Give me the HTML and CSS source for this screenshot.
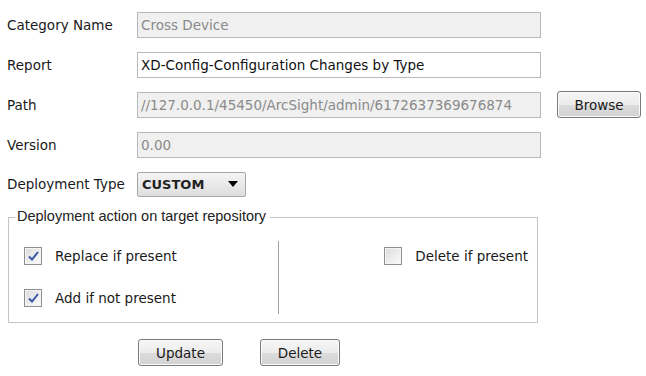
FILE: index.html
```html
<!DOCTYPE html>
<html lang="en">
	<head>
		<meta charset="UTF-8" />
		<title>Deployment</title>
		<link rel="stylesheet" href="styles.css">
	</head>
	<body>
		<form class="deploy">
			<div class="fields">
				<label>Category Name</label>
				<div class="box disabled">Cross Device</div>
				<span></span>

				<label>Report</label>
				<div class="box">XD-Config-Configuration Changes by Type</div>
				<span></span>

				<label>Path</label>
				<div class="box disabled">//127.0.0.1/45450/ArcSight/admin/6172637369676874</div>
				<button type="button" class="btn">Browse</button>

				<label>Version</label>
				<div class="box disabled">0.00</div>
				<span></span>

				<label>Deployment Type</label>
				<div class="select">
					<span>CUSTOM</span>
					<svg width="10" height="6" viewBox="0 0 10 6"><path d="M0 0 H10 L5 6 Z" fill="#000"/></svg>
				</div>
				<span></span>
			</div>

			<div class="action">
				<span class="legend">Deployment action on target repository</span>
				<div class="col">
					<div class="check">
						<span class="tick"><svg width="11" height="10" viewBox="0 0 11 10"><path d="M1 5.5 L4 8.5 L10 1" fill="none" stroke="#3a55a6" stroke-width="2"/></svg></span>
						Replace if present
					</div>
					<div class="check">
						<span class="tick"><svg width="11" height="10" viewBox="0 0 11 10"><path d="M1 5.5 L4 8.5 L10 1" fill="none" stroke="#3a55a6" stroke-width="2"/></svg></span>
						Add if not present
					</div>
				</div>
				<div class="divider"></div>
				<div class="col right">
					<div class="check">
						<span class="tick"></span>
						Delete if present
					</div>
				</div>
			</div>

			<div class="actions">
				<button type="button" class="btn">Update</button>
				<button type="button" class="btn">Delete</button>
			</div>
		</form>
	</body>
</html>
```

FILE: styles.css
```css
* {
	box-sizing: border-box;
	margin: 0;
	padding: 0;
}

body {
	font-family: "DejaVu Sans", sans-serif;
	font-size: 13.5px;
	color: #1a1a1a;
	background: #fff;
}

.deploy {
	padding: 12px 0 0 7px;
	width: 646px;
}

.fields {
	display: grid;
	grid-template-columns: 114px 404px 84px;
	column-gap: 16px;
	row-gap: 13.5px;
	align-items: center;
}

.fields label {
	line-height: 26px;
	white-space: nowrap;
}

.box {
	height: 26px;
	line-height: 24px;
	border: 1px solid #b9b9b9;
	padding: 0 3px;
	background: #fff;
	color: #111;
	white-space: nowrap;
	overflow: hidden;
}

.box.disabled {
	background: #f0f0f0;
	color: #8a8a8a;
}

.btn {
	font-family: inherit;
	font-size: 13.5px;
	color: #1a1a1a;
	height: 27px;
	border: 1px solid #7a7a7a;
	border-radius: 3px;
	background: linear-gradient(#f6f6f6 0%, #ececec 50%, #dcdcdc 51%, #d2d2d2 100%);
	box-shadow: inset 0 0 0 1px #fbfbfb;
	cursor: pointer;
}

.select {
	width: 109px;
	height: 25px;
	border: 1px solid #a6a6a6;
	border-radius: 2px;
	background: linear-gradient(#f4f4f4, #dedede);
	display: flex;
	align-items: center;
	justify-content: space-between;
	padding: 0 7px 0 4px;
	font-size: 13px;
	font-weight: bold;
	color: #222;
}

/* group box with caption sitting on the top border */
.action {
	position: relative;
	margin: 20px 0 0 1px;
	width: 530px;
	height: 106px;
	border: 1px solid #c4c4c4;
	display: flex;
	padding: 0 9px 0 15px;
}

.legend {
	position: absolute;
	top: -10px;
	left: 6px;
	padding: 0 4px 0 2px;
	background: #fff;
	font-family: "Liberation Sans", Arial, sans-serif;
	font-size: 14.5px;
	line-height: 17px;
	color: #222;
}

.col {
	display: flex;
	flex-direction: column;
	gap: 24px;
	padding-top: 29px;
	width: 254px;
}

.col.right {
	flex: 1;
	align-items: flex-end;
}

.divider {
	width: 1px;
	background: #a0a0a0;
	margin: 23px 0 8px;
}

.check {
	display: flex;
	align-items: center;
	gap: 13px;
	height: 18px;
}

.tick {
	width: 18px;
	height: 18px;
	border: 1px solid #8e8f8f;
	background: linear-gradient(135deg, #dcdcdc, #fbfbfb);
	display: flex;
	align-items: center;
	justify-content: center;
	box-shadow: inset 0 0 0 1px #f4f4f4;
}

.actions {
	display: flex;
	gap: 37px;
	padding-left: 131px;
	margin-top: 16px;
}

.actions .btn {
	width: 85px;
}

.actions .btn + .btn {
	width: 80px;
}
```
